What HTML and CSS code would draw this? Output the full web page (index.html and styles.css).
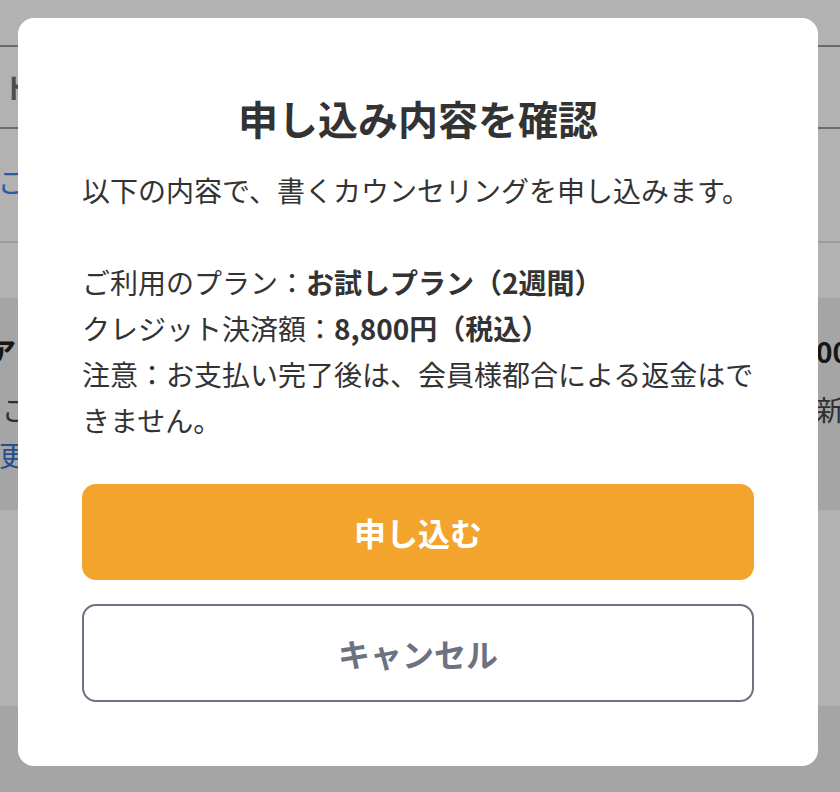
FILE: index.html
```html
<!DOCTYPE html>
<html lang="ja">
<head>
<meta charset="utf-8">
<title>申し込み内容を確認</title>
<link rel="stylesheet" href="styles.css">
</head>
<body>
<div class="page">
  <nav class="tabs">
    <span class="tab">ト</span>
  </nav>
  <a class="link">ご</a>
  <hr class="divider">
  <section class="band">
    <div class="band-left">
      <div class="band-title">ア</div>
      <div class="band-text">でご</div>
      <div class="band-link">更</div>
    </div>
    <div class="band-right">
      <div class="band-title">00</div>
      <div class="band-text">新</div>
    </div>
  </section>
  <footer class="foot"></footer>
</div>

<div class="overlay">
  <div class="modal">
    <h1 class="modal-title">申し込み内容を確認</h1>
    <p class="modal-body">以下の内容で、書くカウンセリングを申し込みます。<br><br>ご利用のプラン：<b>お試しプラン（2週間）</b><br>クレジット決済額：<b>8,800円（税込）</b><br>注意：お支払い完了後は、会員様都合による返金はできません。</p>
    <button class="btn btn-primary" type="button">申し込む</button>
    <button class="btn btn-secondary" type="button">キャンセル</button>
  </div>
</div>
</body>
</html>
```

FILE: styles.css
```css
html, body {
  margin: 0;
  padding: 0;
}
body {
  width: 840px;
  height: 792px;
  overflow: hidden;
  background: #ffffff;
  font-family: "Noto Sans CJK JP", "Noto Sans", sans-serif;
  color: #333333;
}

/* underlying page */
.page {
  padding-top: 45px;
}
.tabs {
  display: flex;
  align-items: center;
  height: 80px;
  border-top: 2px solid #9a9a9a;
  border-bottom: 2px solid #9a9a9a;
  padding-left: 3px;
  font-size: 28px;
  font-weight: 700;
  color: #6f6f6f;
}
.link {
  display: block;
  margin-top: 29px;
  margin-left: -2px;
  font-size: 28px;
  line-height: 46px;
  color: #3b82f6;
}
.divider {
  margin: 37px 0 0;
  border: 0;
  border-top: 2px solid #e3e3e3;
}
.band {
  display: flex;
  margin-top: 55px;
  height: 212px;
  background: #ededed;
  font-size: 28px;
  line-height: 46px;
  overflow: hidden;
}
.band-left {
  width: 816px;
  padding-top: 30px;
  flex: none;
}
.band-left .band-title {
  margin-left: -12px;
}
.band-left .band-text {
  margin-left: -26px;
}
.band-left .band-link {
  margin-left: -1px;
}
.band-right {
  padding-top: 30px;
  flex: none;
}
.band-title {
  font-weight: 700;
  color: #222222;
}
.band-text {
  margin-top: 12px;
  color: #444444;
}
.band-link {
  color: #3b6fd0;
}
.foot {
  margin-top: 196px;
  height: 100px;
  background: #ededed;
}

/* overlay + modal */
.overlay {
  position: fixed;
  inset: 0;
  background: rgba(0, 0, 0, 0.3);
  display: flex;
  justify-content: flex-start;
  align-items: flex-start;
  padding: 18px 0 0 18px;
}
.modal {
  width: 800px;
  box-sizing: border-box;
  padding: 64px;
  background: #ffffff;
  border-radius: 16px;
  display: flex;
  flex-direction: column;
}
.modal-title {
  margin: 0;
  font-size: 40px;
  line-height: 72px;
  font-weight: 700;
  text-align: center;
  color: #333333;
}
.modal-body {
  margin: 13px 0 0;
  font-size: 28px;
  line-height: 46px;
  color: #333333;
}
.modal-body b {
  font-weight: 700;
}
.btn {
  display: flex;
  align-items: center;
  justify-content: center;
  width: 100%;
  box-sizing: border-box;
  border-radius: 14px;
  font-family: "Noto Sans CJK JP", "Noto Sans", sans-serif;
  font-size: 32px;
  font-weight: 700;
  cursor: pointer;
}
.btn-primary {
  margin-top: 41px;
  height: 96px;
  border: 0;
  background: #f3a42c;
  color: #ffffff;
}
.btn-secondary {
  margin-top: 24px;
  height: 98px;
  border: 2px solid #6b7280;
  background: #ffffff;
  color: #6b7280;
}
```
